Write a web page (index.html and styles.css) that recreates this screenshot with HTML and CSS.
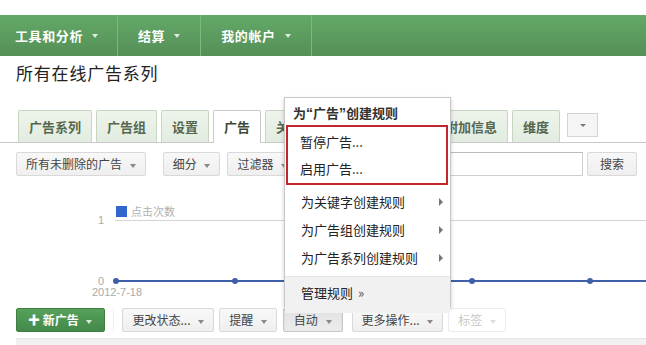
FILE: index.html
```html
<!DOCTYPE html>
<html>
<head>
    <title>所有在线广告系列</title>
    <link rel="stylesheet" href="styles.css">
</head>
<body>
    <div class="page">
        <!-- Top navigation -->
        <nav class="nav">
            <div class="nav-item first">工具和分析 <span class="caret"></span></div>
            <div class="nav-item">结算 <span class="caret"></span></div>
            <div class="nav-item">我的帐户 <span class="caret"></span></div>
        </nav>

        <h1 class="title">所有在线广告系列</h1>

        <!-- Tabs -->
        <div class="tabs">
            <div class="tab">广告系列</div>
            <div class="tab">广告组</div>
            <div class="tab">设置</div>
            <div class="tab active">广告</div>
            <div class="tab">关键字</div>
            <div class="tab">受众群体</div>
            <div class="tab">广告附加信息</div>
            <div class="tab">维度</div>
            <div class="tab-more"><span class="caret small"></span></div>
        </div>

        <!-- Filter toolbar -->
        <div class="toolbar">
            <div class="btn">所有未删除的广告 <span class="caret"></span></div>
            <div class="btn">细分 <span class="caret"></span></div>
            <div class="btn">过滤器 <span class="caret"></span></div>
            <div class="search"></div>
            <div class="btn">搜索</div>
        </div>

        <!-- Chart -->
        <div class="chart">
            <svg width="646" height="132">
                <rect x="116" y="30" width="11" height="11" fill="#3366cc"/>
                <text x="131" y="40" class="legend">点击次数</text>
                <line x1="115" y1="44.5" x2="646" y2="44.5" stroke="#d4d4d4"/>
                <text x="104" y="48" class="axis" text-anchor="end">1</text>
                <text x="104" y="109" class="axis" text-anchor="end">0</text>
                <line x1="116" y1="105" x2="646" y2="105" stroke="#3f5fa8" stroke-width="2"/>
                <circle cx="116" cy="105" r="3" fill="#3f5fa8"/>
                <circle cx="235" cy="105" r="3" fill="#3f5fa8"/>
                <circle cx="353" cy="105" r="3" fill="#3f5fa8"/>
                <circle cx="472" cy="105" r="3" fill="#3f5fa8"/>
                <circle cx="590" cy="105" r="3" fill="#3f5fa8"/>
                <text x="117" y="120" class="axis" text-anchor="middle">2012-7-18</text>
            </svg>
        </div>

        <!-- Action toolbar -->
        <div class="actions">
            <div class="btn green">✚ 新广告 <span class="caret"></span></div>
            <div class="divider"></div>
            <div class="btn">更改状态... <span class="caret"></span></div>
            <div class="btn">提醒 <span class="caret"></span></div>
            <div class="btn pressed">自动 <span class="caret"></span></div>
            <div class="btn wide-gap">更多操作... <span class="caret"></span></div>
            <div class="btn disabled">标签 <span class="caret"></span></div>
        </div>

        <div class="table-head"></div>

        <!-- Automate menu -->
        <div class="menu">
            <div class="menu-title">为<span class="q">“</span>广告<span class="q">”</span>创建规则</div>
            <div class="menu-hl">
                <div class="menu-item">暂停广告...</div>
                <div class="menu-item">启用广告...</div>
            </div>
            <div class="menu-item sub">为关键字创建规则 <span class="arrow"></span></div>
            <div class="menu-item sub">为广告组创建规则 <span class="arrow"></span></div>
            <div class="menu-item sub">为广告系列创建规则 <span class="arrow"></span></div>
            <div class="menu-foot">管理规则 <span class="raquo">»</span></div>
        </div>
    </div>
</body>
</html>
```

FILE: styles.css
```css
body {
    margin: 0;
    background: #fff;
    font-family: "Noto Sans CJK SC", "Liberation Sans", sans-serif;
    font-size: 12px;
    color: #333;
}
.page {
    position: relative;
    width: 646px;
    height: 345px;
    overflow: hidden;
    padding-top: 15px;
    box-sizing: border-box;
}
.caret {
    display: inline-block;
    width: 0;
    height: 0;
    border-left: 3.5px solid transparent;
    border-right: 3.5px solid transparent;
    border-top: 4px solid #888;
    vertical-align: middle;
    margin-left: 3px;
}
.nav {
    display: flex;
    height: 41px;
    background: linear-gradient(#63a967, #558f57);
}
.nav-item {
    display: flex;
    align-items: center;
    padding: 0 20px;
    color: #fff;
    font-weight: bold;
    font-size: 13px;
    letter-spacing: 0.6px;
    border-right: 1px solid #7cb97e;
}
.nav-item.first {
    padding-left: 15px;
    padding-right: 19px;
}
.nav-item .caret {
    border-top-color: #dfeadf;
    margin-left: 9px;
}
.title {
    margin: 5px 0 0 16px;
    font-size: 17px;
    font-weight: normal;
    line-height: 24px;
    letter-spacing: 0.8px;
    color: #222;
}
.tabs {
    display: flex;
    align-items: flex-end;
    gap: 4px;
    margin-top: 25px;
    padding-left: 18px;
    height: 32px;
    border-bottom: 1px solid #c9c9c9;
}
.tab {
    height: 31px;
    line-height: 31px;
    padding: 0 10px;
    font-size: 13px;
    font-weight: bold;
    color: #56674f;
    background: linear-gradient(#eef4eb, #e2ece0);
    border: 1px solid #c8d5c3;
    border-bottom: none;
    border-radius: 2px 2px 0 0;
}
.tab.active {
    background: #fff;
    color: #3d4a39;
    border-color: #c9c9c9;
    height: 32px;
    margin-bottom: -1px;
}
.tab-more {
    align-self: flex-start;
    margin: 3px 0 0 3px;
    width: 29px;
    height: 22px;
    border: 1px solid #d4d4d4;
    background: #f5f5f5;
    display: flex;
    align-items: center;
    justify-content: center;
}
.tab-more .caret {
    margin: 0;
    border-top-color: #777;
    border-left-width: 3px;
    border-right-width: 3px;
    border-top-width: 3px;
}
.toolbar {
    display: flex;
    align-items: center;
    gap: 7px;
    margin-top: 9px;
    padding: 0 9px 0 16px;
}
.btn {
    height: 22px;
    line-height: 22px;
    padding: 0 9px;
    border: 1px solid #d9d9d9;
    border-radius: 2px;
    background: linear-gradient(#f8f8f8, #efefef);
    color: #444;
    white-space: nowrap;
}
.btn .caret {
    margin-left: 5px;
}
.toolbar .btn:nth-child(2) {
    margin-left: 10px;
}
.search {
    flex: 1;
    height: 22px;
    border: 1px solid #cfcfcf;
    border-top-color: #bbb;
    background: #fff;
    margin-left: 6px;
}
.toolbar .btn:last-child {
    padding: 0 12px;
    margin-left: -3px;
}
.chart {
    height: 132px;
}
.chart svg {
    display: block;
}
.legend {
    font-size: 11px;
    fill: #b0b0b0;
}
.axis {
    font-size: 11px;
    fill: #aaa;
    font-family: "Liberation Sans", sans-serif;
}
.actions {
    display: flex;
    align-items: center;
    gap: 5px;
    padding-left: 16px;
}
.actions .btn.green {
    background: linear-gradient(#56a15a, #44894a);
    border-color: #3f7f43;
    color: #fff;
    font-weight: bold;
    padding: 0 12px 0 11px;
}
.btn.green .caret {
    border-top-color: #d8ead8;
}
.divider {
    width: 1px;
    height: 22px;
    background: #eee;
    margin: 0 3px 0 3px;
}
.btn.pressed {
    background: linear-gradient(#e2e2e2, #ececec);
    border-color: #c6c6c6;
    box-shadow: inset 0 1px 2px rgba(0, 0, 0, 0.12);
    padding: 0 10px;
    margin-left: 1px;
}
.btn.wide-gap {
    margin-left: 4px;
}
.btn.disabled {
    color: #c8c8c8;
    background: #fff;
    border-color: #ececec;
}
.btn.disabled .caret {
    border-top-color: #ddd;
}
.table-head {
    margin: 6px 0 0 16px;
    height: 10px;
    background: #f1f1f1;
    border-top: 1px solid #e4e4e4;
}
.menu {
    position: absolute;
    left: 284px;
    top: 97px;
    width: 165px;
    height: 208px;
    background: #fff;
    border: 1px solid #c8c8c8;
    box-shadow: 0 2px 4px rgba(0, 0, 0, 0.2);
    font-size: 13px;
    color: #222;
}
.menu-title {
    height: 27px;
    line-height: 30px;
    padding-left: 8px;
    font-weight: bold;
    color: #333;
}
.menu-title .q {
    font-family: "Liberation Sans", sans-serif;
    font-size: 14px;
}
.menu-hl {
    margin: 0 2px 0 1px;
    border: 2px solid #c0262c;
    padding: 1px 0;
}
.menu-item {
    height: 27px;
    line-height: 27px;
    padding-left: 12px;
    position: relative;
}
.menu-item.sub {
    height: 28px;
    line-height: 28px;
    padding-left: 16px;
}
.menu-hl + .menu-item.sub {
    margin-top: 3px;
}
.arrow {
    position: absolute;
    right: 7px;
    top: 10px;
    border-top: 4px solid transparent;
    border-bottom: 4px solid transparent;
    border-left: 4px solid #777;
}
.menu-foot {
    margin-top: 4px;
    border-top: 1px solid #e6e6e6;
    background: #f1f1f1;
    height: 36px;
    line-height: 31px;
    padding-left: 16px;
}
.raquo {
    color: #555;
    margin-left: 2px;
}
```
